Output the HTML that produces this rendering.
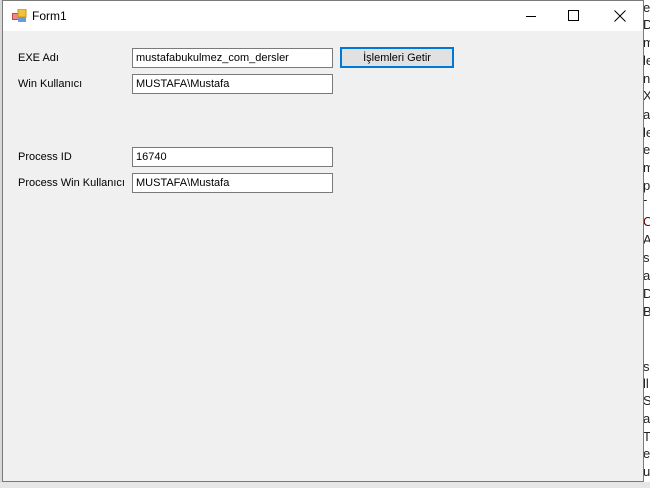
<!DOCTYPE html>
<html><head><meta charset="utf-8"><style>
*{margin:0;padding:0;box-sizing:border-box}
body{width:650px;height:488px;background:#fff;position:relative;overflow:hidden;font-family:"Liberation Sans",sans-serif;font-size:11px;color:#000}
.strip{position:absolute;left:0;top:0;width:3px;height:488px;background:#d8d8d8}
.bottom{position:absolute;left:0;top:482px;width:650px;height:6px;background:#e6e6e6}
.win{position:absolute;left:2px;top:0;width:642px;height:482px;border:1px solid #7a7a7a;background:#f0f0f0}
.title{position:absolute;left:0;top:0;width:640px;height:30px;background:#fff}
.title .t{position:absolute;left:29px;top:8px;font-size:12px}
.lbl{position:absolute;left:15px;font-size:11px}
.tb{position:absolute;left:129px;width:201px;height:20px;background:#fff;border:1px solid #7a7a7a;padding:3px 0 0 3px;font-size:11px}
.btn{position:absolute;left:337px;top:46px;width:114px;height:21px;background:#e1e1e1;border:2px solid #0078d7;text-align:center;padding-top:3px}
.r{position:absolute;left:643px;font-size:13px;color:#222;line-height:14px}
</style></head><body>
<div class="strip"></div>
<div class="bottom"></div>
<div class="r" style="top:1px">e</div><div class="r" style="top:18px">De</div><div class="r" style="top:36px">m</div><div class="r" style="top:54px">le</div><div class="r" style="top:72px">n</div><div class="r" style="top:89px">X</div><div class="r" style="top:108px">a</div><div class="r" style="top:126px">le</div><div class="r" style="top:143px">e</div><div class="r" style="top:161px">m</div><div class="r" style="top:179px">p</div><div class="r" style="top:193px">-</div><div class="r" style="top:215px;color:#600">Ot</div><div class="r" style="top:233px">A</div><div class="r" style="top:251px">si</div><div class="r" style="top:269px">a</div><div class="r" style="top:287px">D</div><div class="r" style="top:305px">Bo</div>
<div class="r" style="top:360px">s</div><div class="r" style="top:377px">ll</div><div class="r" style="top:394px">S</div><div class="r" style="top:412px">a</div><div class="r" style="top:430px">T</div><div class="r" style="top:447px">er</div><div class="r" style="top:465px">u</div>
<div class="win">
<div class="title">
<svg style="position:absolute;left:9px;top:8px" width="16" height="14"><rect x="0" y="4" width="7" height="7" fill="#c44" /><rect x="1" y="5" width="5" height="5" fill="#e88"/><rect x="6" y="0" width="8" height="8" fill="#f0c040" stroke="#c90" stroke-width="1"/><rect x="6" y="8" width="8" height="5" fill="#6a9ad8"/></svg>
<div class="t">Form1</div>
<div style="position:absolute;left:523px;top:15px;width:10px;height:1px;background:#000"></div>
<div style="position:absolute;left:565px;top:9px;width:11px;height:11px;border:1px solid #000"></div>
<svg style="position:absolute;left:611px;top:9px" width="12" height="12"><path d="M0.5 0.5L11.5 11.5M11.5 0.5L0.5 11.5" stroke="#000" stroke-width="1"/></svg>
</div>
<div class="lbl" style="top:51px">EXE Adı</div>
<div class="lbl" style="top:77px">Win Kullanıcı</div>
<div class="lbl" style="top:150px">Process ID</div>
<div class="lbl" style="top:176px">Process Win Kullanıcı</div>
<div class="tb" style="top:47px">mustafabukulmez_com_dersler</div>
<div class="tb" style="top:73px">MUSTAFA\Mustafa</div>
<div class="tb" style="top:146px">16740</div>
<div class="tb" style="top:172px">MUSTAFA\Mustafa</div>
<div class="btn">İşlemleri Getir</div>
</div>
</body></html>
